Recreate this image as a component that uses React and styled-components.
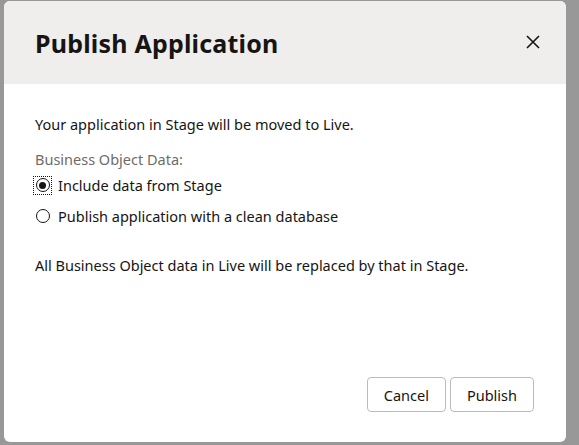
import React, { useState } from "react";
import styled, { createGlobalStyle } from "styled-components";

const GlobalStyle = createGlobalStyle`
  html, body {
    margin: 0;
    padding: 0;
    background: #989898;
  }
  body {
    font-family: "Noto Sans", "Open Sans", Arial, sans-serif;
    color: #161513;
  }
`;

export default function App() {
  const [choice, setChoice] = useState("include");

  return (
    <>
      <GlobalStyle />
      <Backdrop>
        <Dialog>
          <Header>
            <Title>Publish Application</Title>
            <CloseButton aria-label="Close">
              <svg width="14" height="14" viewBox="0 0 14 14">
                <path d="M1 1 L13 13 M13 1 L1 13" stroke="#161513" strokeWidth="1.6" fill="none" />
              </svg>
            </CloseButton>
          </Header>
          <Body>
            <Text>Your application in Stage will be moved to Live.</Text>
            <Group>
              <Label>Business Object Data:</Label>
              <Option height={32}>
                <Radio checked={choice === "include"} onClick={() => setChoice("include")} />
                Include data from Stage
              </Option>
              <Option height={30}>
                <Radio checked={choice === "clean"} onClick={() => setChoice("clean")} />
                Publish application with a clean database
              </Option>
            </Group>
            <Text>All Business Object data in Live will be replaced by that in Stage.</Text>
          </Body>
          <Footer>
            <Button>Cancel</Button>
            <Button>Publish</Button>
          </Footer>
        </Dialog>
      </Backdrop>
    </>
  );
}

const Backdrop = styled.div`
  padding: 1px 0 0 4px;
  height: 444px;
  box-sizing: border-box;
`;

const Dialog = styled.div`
  width: 562px;
  height: 441px;
  background: #fff;
  border-radius: 6px;
  overflow: hidden;
  display: flex;
  flex-direction: column;
`;

const Header = styled.div`
  height: 83px;
  background: #f0eeec;
  display: flex;
  align-items: center;
  justify-content: space-between;
  padding: 0 26px 0 31px;
  flex-shrink: 0;
`;

const Title = styled.h1`
  margin: 0;
  font-size: 25px;
  letter-spacing: 0.2px;
  font-weight: 700;
  color: #161513;
`;

const CloseButton = styled.div`
  display: flex;
  align-items: center;
  margin-top: -2px;
`;

const Body = styled.div`
  flex: 1;
  padding: 30px 31px 0;
  font-size: 14.5px;
`;

const Text = styled.p`
  margin: 0;
  line-height: 20px;
`;

const Group = styled.div`
  margin: 15px 0 24px;
`;

const Label = styled.div`
  color: #6f6c68;
  line-height: 20px;
`;

const Option = styled.label`
  display: flex;
  align-items: center;
  gap: 6px;
  height: ${(p) => p.height}px;
`;

const RadioWrap = styled.span`
  width: 19px;
  height: 19px;
  box-sizing: border-box;
  display: flex;
  align-items: center;
  justify-content: center;
  outline: ${(p) => (p.focused ? "1px dotted #161513" : "none")};
  outline-offset: -1px;
  margin-left: -2px;
`;

const Circle = styled.span`
  width: 14px;
  height: 14px;
  border: 1.5px solid #161513;
  border-radius: 50%;
  box-sizing: border-box;
  display: flex;
  align-items: center;
  justify-content: center;
  &::after {
    content: "";
    width: 7px;
    height: 7px;
    border-radius: 50%;
    background: #161513;
    display: ${(p) => (p.checked ? "block" : "none")};
  }
`;

function Radio({ checked, onClick }) {
  return (
    <RadioWrap focused={checked} onClick={onClick}>
      <Circle checked={checked} />
    </RadioWrap>
  );
}

const Footer = styled.div`
  display: flex;
  justify-content: flex-end;
  gap: 4px;
  padding: 0 32px 30px;
`;

const Button = styled.button`
  height: 35px;
  padding: 0 16px;
  background: #fff;
  border: 1px solid #bdbbb8;
  border-radius: 4px;
  font-family: inherit;
  font-size: 14.5px;
  color: #161513;
`;
